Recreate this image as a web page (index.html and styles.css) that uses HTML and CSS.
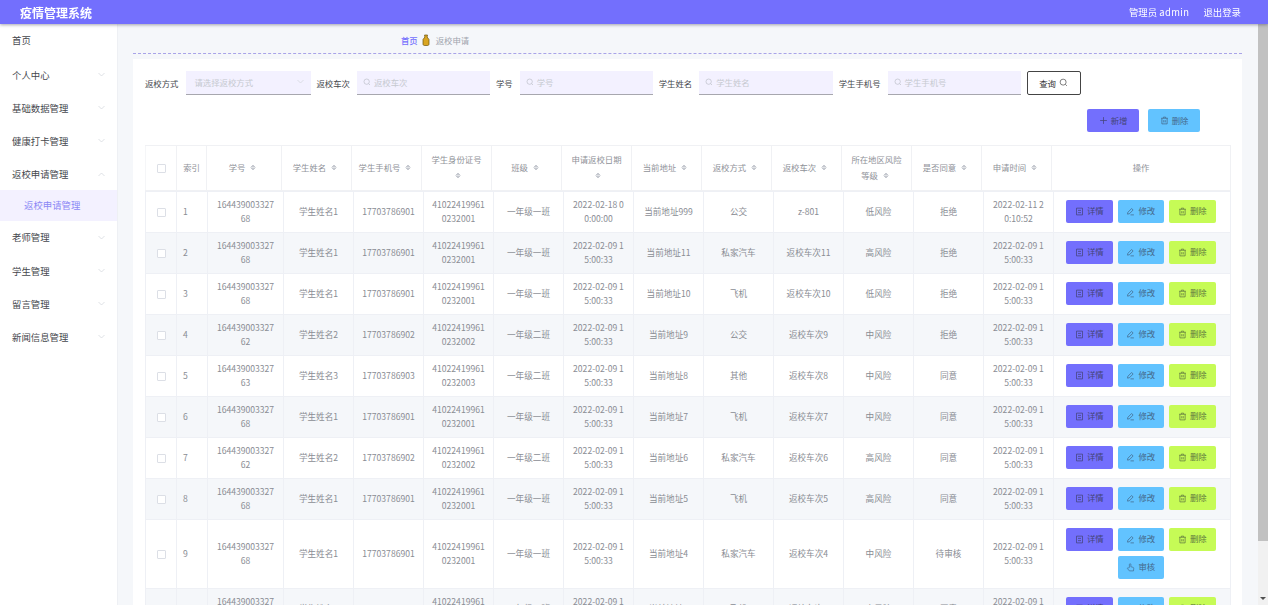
FILE: index.html
```html
<!DOCTYPE html>
<html lang="zh">
<head>
<meta charset="utf-8">
<title>疫情管理系统</title>
<link rel="stylesheet" href="styles.css">
</head>
<body>
<svg class="defs" width="0" height="0" aria-hidden="true">
  <symbol id="i-search" viewBox="0 0 12 12"><circle cx="5.5" cy="5.5" r="4" fill="none" stroke="currentColor"/><path d="M8.5 8.5l2 2" stroke="currentColor" fill="none"/></symbol>
  <symbol id="i-detail" viewBox="0 0 12 12"><path d="M2 1.5h8v9H2zM4 4.5h4M4 7.5h4" fill="none" stroke="currentColor"/></symbol>
  <symbol id="i-edit" viewBox="0 0 12 12"><path d="M7.5 2l2 2-5 5-2.5.5.5-2.5zM6 10.5h4.5" fill="none" stroke="currentColor"/></symbol>
  <symbol id="i-del" viewBox="0 0 12 12"><path d="M1.5 3h9M4.5 3V1.5h3V3M2.5 3v7.5h7V3M5 5.5v3M7 5.5v3" fill="none" stroke="currentColor"/></symbol>
  <symbol id="i-check" viewBox="0 0 12 12"><path d="M4.5 6V2a1 1 0 0 1 2 0v3l3 .8c.6.2.9.7.8 1.3L10 10.500H4.500L2 7.500c-.5-.8.5-1.700 1.300-1z" fill="none" stroke="currentColor" stroke-width=".9"/></symbol>
  <symbol id="i-plus" viewBox="0 0 12 12"><path d="M6 1.500v9M1.500 6h9" fill="none" stroke="currentColor"/></symbol>
  <symbol id="i-chev" viewBox="0 0 12 12"><path d="M2 4l4 4 4-4" fill="none" stroke="currentColor"/></symbol>
</svg>

<header class="topbar">
  <div class="brand">疫情管理系统</div>
  <div class="user"><span>管理员 <span class="uname">admin</span></span><span>退出登录</span></div>
</header>

<div class="shell">
  <aside class="side">
    <div class="menu-item first"><span>首页</span></div>
    <div class="menu-item"><span>个人中心</span><svg class="chev"><use href="#i-chev"/></svg></div>
    <div class="menu-item"><span>基础数据管理</span><svg class="chev"><use href="#i-chev"/></svg></div>
    <div class="menu-item"><span>健康打卡管理</span><svg class="chev"><use href="#i-chev"/></svg></div>
    <div class="menu-item"><span>返校申请管理</span><svg class="chev up"><use href="#i-chev"/></svg></div>
    <div class="menu-sub">返校申请管理</div>
    <div class="menu-item"><span>老师管理</span><svg class="chev"><use href="#i-chev"/></svg></div>
    <div class="menu-item"><span>学生管理</span><svg class="chev"><use href="#i-chev"/></svg></div>
    <div class="menu-item"><span>留言管理</span><svg class="chev"><use href="#i-chev"/></svg></div>
    <div class="menu-item"><span>新闻信息管理</span><svg class="chev"><use href="#i-chev"/></svg></div>
  </aside>

  <main class="main">
    <nav class="crumb">
      <span class="crumb-home">首页</span>
      <svg class="crumb-icon" viewBox="0 0 8 12"><path d="M2.500 1h3l-.4 2 1.900 2.500V10c0 1-.8 1.500-1.500 1.500h-3C1.800 11.500 1 11 1 10V5.500L2.900 3z" fill="#d9a520" stroke="#6b5310" stroke-width=".7"/></svg>
      <span class="crumb-cur">返校申请</span>
    </nav>

    <section class="card">
      <div class="filters">
        <label class="f-label">返校方式</label>
        <div class="field w-select"><span class="ph">请选择返校方式</span><svg class="chev sel"><use href="#i-chev"/></svg></div>
        <label class="f-label">返校车次</label>
        <div class="field w-b"><svg class="s-icon"><use href="#i-search"/></svg><span class="ph">返校车次</span></div>
        <label class="f-label">学号</label>
        <div class="field w-b"><svg class="s-icon"><use href="#i-search"/></svg><span class="ph">学号</span></div>
        <label class="f-label">学生姓名</label>
        <div class="field w-c"><svg class="s-icon"><use href="#i-search"/></svg><span class="ph">学生姓名</span></div>
        <label class="f-label">学生手机号</label>
        <div class="field w-b"><svg class="s-icon"><use href="#i-search"/></svg><span class="ph">学生手机号</span></div>
        <button class="query">查询 <svg class="q-icon"><use href="#i-search"/></svg></button>
      </div>

      <div class="actions">
        <button class="btn tb purple"><svg class="b-icon"><use href="#i-plus"/></svg>新增</button>
        <button class="btn tb blue"><svg class="b-icon"><use href="#i-del"/></svg>删除</button>
      </div>

      <div class="table-wrap">
        <table class="thead-table">
          <colgroup><col class="c1"><col class="c2h"><col class="c3h"><col class="cn" span="11"><col class="c-op"></colgroup>
          <thead><tr id="head"></tr></thead>
        </table>
        <table class="tbody-table">
          <colgroup><col class="c1"><col class="c2"><col class="c3"><col class="cn" span="11"><col class="c-opb"></colgroup>
          <tbody id="rows"></tbody>
        </table>
      </div>
    </section>
  </main>

  <div class="scrollbar">
    <div class="thumb"></div>
    <div class="arrow"></div>
  </div>
</div>
<script src="app.js"></script>
</body>
</html>
```
FILE: app.js
```js
var heads = ['学号','学生姓名','学生手机号','学生身份证号','班级','申请返校日期','当前地址','返校方式','返校车次','所在地区风险等级','是否同意','申请时间'];
var sort = '<span class="sort"></span>';
var h = '<th><span class="cb"></span></th><th class="th-idx">索引</th>';
heads.forEach(function (x) { h += '<th>' + x + sort + '</th>'; });
h += '<th>操作</th>';
document.getElementById('head').innerHTML = h;

var T = '2022-02-09 15:00:33';
var rows = [
  ['16443900332768','学生姓名1','17703786901','410224199610232001','一年级一班','2022-02-18 00:00:00','当前地址999','公交','z-801','低风险','拒绝','2022-02-11 20:10:52'],
  ['16443900332768','学生姓名1','17703786901','410224199610232001','一年级一班',T,'当前地址11','私家汽车','返校车次11','高风险','拒绝',T],
  ['16443900332768','学生姓名1','17703786901','410224199610232001','一年级一班',T,'当前地址10','飞机','返校车次10','低风险','拒绝',T],
  ['16443900332762','学生姓名2','17703786902','410224199610232002','一年级二班',T,'当前地址9','公交','返校车次9','中风险','拒绝',T],
  ['16443900332763','学生姓名3','17703786903','410224199610232003','一年级二班',T,'当前地址8','其他','返校车次8','中风险','同意',T],
  ['16443900332768','学生姓名1','17703786901','410224199610232001','一年级一班',T,'当前地址7','飞机','返校车次7','中风险','同意',T],
  ['16443900332762','学生姓名2','17703786902','410224199610232002','一年级二班',T,'当前地址6','私家汽车','返校车次6','高风险','同意',T],
  ['16443900332768','学生姓名1','17703786901','410224199610232001','一年级一班',T,'当前地址5','飞机','返校车次5','高风险','同意',T],
  ['16443900332768','学生姓名1','17703786901','410224199610232001','一年级一班',T,'当前地址4','私家汽车','返校车次4','中风险','待审核',T],
  ['16443900332768','学生姓名1','17703786901','410224199610232001','一年级一班',T,'当前地址3','飞机','返校车次3','中风险','同意',T]
];
function ic(n) { return '<svg class="b-icon"><use href="#i-' + n + '"/></svg>'; }
var out = '';
rows.forEach(function (r, i) {
  var cells = r.map(function (c) { return '<td><div class="cell">' + c + '</div></td>'; }).join('');
  var ops = '<button class="btn op purple">' + ic('detail') + '详情</button>' +
            '<button class="btn op blue">' + ic('edit') + '修改</button>' +
            '<button class="btn op lime">' + ic('del') + '删除</button>';
  if (r[10] === '待审核') ops += '<button class="btn op blue second">' + ic('check') + '审核</button>';
  out += '<tr' + (i % 2 ? ' class="stripe"' : '') + '><td><span class="cb"></span></td><td class="idx">' + (i + 1) + '</td>' + cells + '<td class="ops"><div class="op-wrap">' + ops + '</div></td></tr>';
});
document.getElementById('rows').innerHTML = out;
```
FILE: styles.css
```css
* { box-sizing: border-box; }
html, body { margin: 0; height: 100%; overflow: hidden; }
body { font-family: "Noto Sans CJK SC", "Noto Sans", sans-serif; font-size: 9px; color: #606266; background: #fff; display: flex; flex-direction: column; filter: blur(.3px); }
.defs { position: absolute; }

.topbar { flex: none; height: 24px; background: #736ffd; color: #fff; display: flex; justify-content: space-between; align-items: center; padding: 0 27px 0 20px; box-shadow: 0 1px 3px rgba(60,60,80,.45); position: relative; z-index: 2; }
.brand { font-size: 12px; font-weight: 700; }
.user { display: flex; gap: 14px; font-size: 9.4px; }
.uname { letter-spacing: .45px; }

.shell { flex: 1; min-height: 0; display: flex; }
.side { flex: none; width: 118px; background: #fff; border-right: 1px solid #eef0f4; padding-top: 1px; }
.menu-item { height: 33.200px; display: flex; align-items: center; justify-content: space-between; padding: 0 11px 0 12px; color: #45474d; font-size: 9.4px; }
.menu-item.first { height: 29px; margin-bottom: 4px; }
.menu-sub { height: 31px; margin-top: -1px; background: #f3f1ff; color: #8b88f5; font-size: 9.4px; display: flex; align-items: center; padding-left: 24px; }
.chev { width: 9px; height: 9px; color: #d3d6dc; }
.chev.up { transform: rotate(180deg); }
.chev.sel { margin-left: auto; }

.main { flex: 1; min-width: 0; overflow: hidden; background: #f5f7fa; padding: 0 16px 12px 15px; }

.scrollbar { flex: none; width: 10px; background: #f1f1f1; display: flex; flex-direction: column; justify-content: space-between; align-items: center; padding-bottom: 5px; }
.thumb { width: 10px; height: 517px; background: #c1c1c1; }
.arrow { width: 0; height: 0; border: 3px solid transparent; border-bottom-width: 0; border-top: 3px solid #505050; }

.crumb { height: 30px; border-bottom: 1px dashed #a9a4e8; display: flex; align-items: center; gap: 4px; padding-left: 268px; padding-top: 3px; font-size: 8.400px; }
.crumb-home { color: #736ffd; font-weight: 500; }
.crumb-cur { color: #a0a4ad; margin-left: 2px; }
.crumb-icon { width: 8px; height: 12px; }

.card { margin-top: 5px; background: #fff; padding: 12px 12px 16px; }
.filters { display: flex; align-items: center; height: 24px; }
.f-label { color: #45474d; font-size: 8.400px; white-space: nowrap; margin-right: 7px; padding-bottom: 1px; }
.field { flex: none; height: 24px; margin-right: 6px; background: #f3f1ff; border-bottom: 1px solid #a7a7ae; display: flex; align-items: center; padding: 0 6px 2px; gap: 3px; color: #c0c4cc; }
.w-select { width: 125px; padding-left: 9px; }
.w-b { width: 133px; }
.w-c { width: 133.400px; }
.ph { font-size: 8.400px; color: #c6c9d0; }
.s-icon { width: 8px; height: 8px; color: #b9bdc6; }
.query { flex: none; width: 54px; height: 24px; background: #fff; border: 1px solid #444; border-radius: 2px; font: inherit; font-size: 8.400px; color: #333; padding: 0 0 1px; display: flex; align-items: center; justify-content: center; gap: 3px; }
.q-icon { width: 9px; height: 9px; color: #555; }

.actions { display: flex; justify-content: flex-end; gap: 9px; margin-top: 14px; padding-right: 30px; }
.btn { border: 0; border-radius: 2px; font: inherit; font-size: 8.400px; display: inline-flex; align-items: center; justify-content: center; gap: 3px; padding: 0 0 1px; }
.tb { width: 52px; height: 23px; }
.purple { background: #736ffd; color: #44447a; }
.blue { background: #62c3ff; color: #44688a; }
.lime { background: #c6fb56; color: #607a40; }
.b-icon { width: 9px; height: 9px; flex: none; }

.table-wrap { margin-top: 13px; width: 1085px; }
table { border-collapse: collapse; table-layout: fixed; width: 1085px; }
.c1 { width: 31px; }
.c2h { width: 30px; }
.c3h { width: 75px; }
.c2 { width: 31px; }
.c3 { width: 76px; }
.cn { width: 70px; }
.c-op { width: 179px; }
.c-opb { width: 177px; }
th { height: 45px; border: 1px solid #f0f1f4; border-left-color: #f5f6f8; padding: 0 6px 3px; font-weight: 400; font-size: 8.400px; line-height: 16px; color: #8f9299; text-align: center; background: #fff; }
th.th-idx { padding: 0 0 3px; white-space: nowrap; }
td { border: 1px solid #eef0f5; padding: 0 6px 1px; text-align: center; font-size: 8.600px; line-height: 13.500px; color: #8a8d94; background: #fff; height: 41px; }
td:nth-child(3) { padding: 0 8px 1px; }
tr.stripe td { background: #f5f7fa; }
.cell { word-break: break-all; }
td.idx { text-align: left; padding-left: 6px; }
.sort { display: inline-block; width: 6px; height: 8px; margin: 0 3px 0 5px; vertical-align: -1px; background: conic-gradient(from 135deg at 50% 20%, #c6c9d0 90deg, transparent 0) top/6px 3.500px no-repeat, conic-gradient(from -45deg at 50% 80%, #c6c9d0 90deg, transparent 0) bottom/6px 3.500px no-repeat; }
.cb { display: inline-block; width: 9px; height: 9px; border: 1px solid #dcdfe6; border-radius: 1px; background: #fff; vertical-align: middle; }
td.ops { padding: 8px 12px 9px; }
.op-wrap { display: flex; flex-wrap: wrap; gap: 5px; justify-content: flex-start; }
.op { width: 46.500px; height: 23px; }
.op.second { margin-left: 51.500px; }
```
